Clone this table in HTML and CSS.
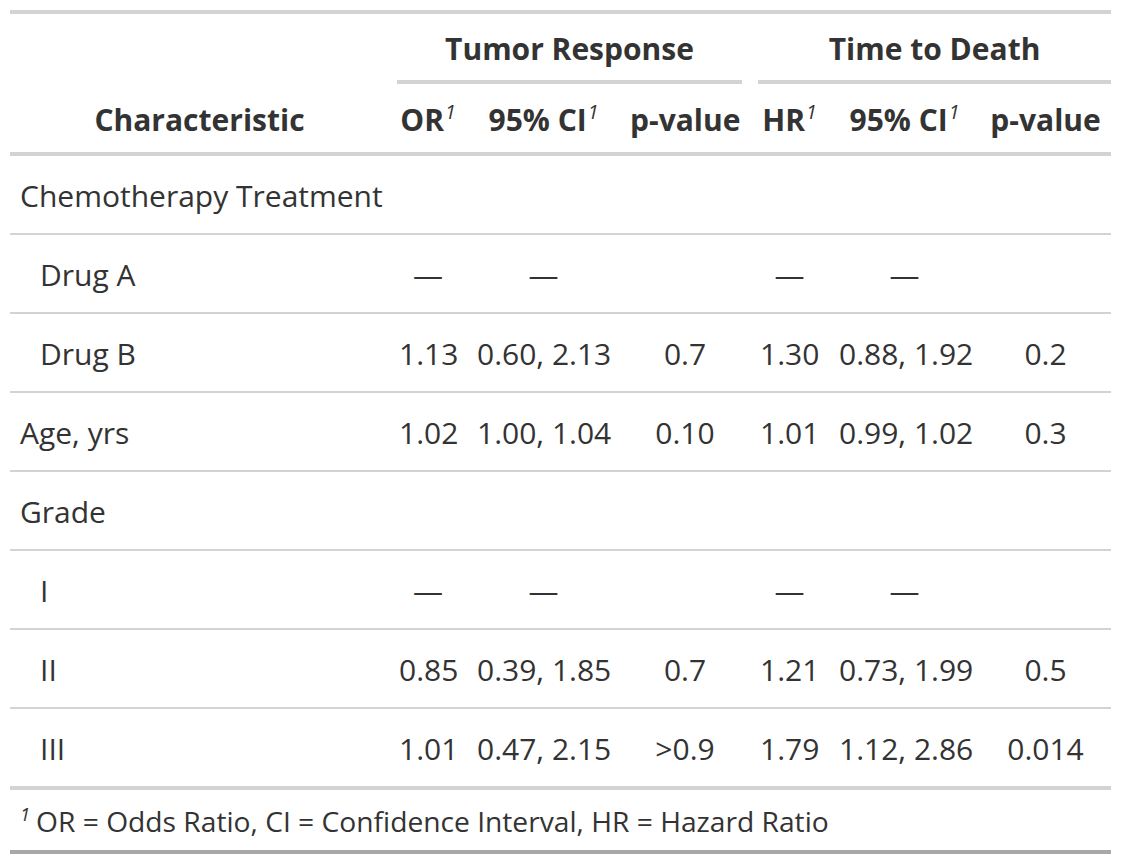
FILE: index.html
```html
<!DOCTYPE html>
<html>
<head>
<meta charset="utf-8">
<link rel="stylesheet" href="styles.css">
</head>
<body>
<table class="tbl">
  <colgroup>
    <col class="c-label">
    <col class="c-or">
    <col class="c-ci1">
    <col class="c-p1">
    <col class="c-hr">
    <col class="c-ci2">
    <col class="c-p2">
  </colgroup>
  <thead>
    <tr class="spanner-row">
      <th class="col-label stub-head" rowspan="2">Characteristic</th>
      <th class="spanner-outer first" colspan="3"><div class="spanner">Tumor Response</div></th>
      <th class="spanner-outer last" colspan="3"><div class="spanner">Time to Death</div></th>
    </tr>
    <tr class="label-row">
      <th class="col-label">OR<span class="mark">1</span></th>
      <th class="col-label">95% CI<span class="mark">1</span></th>
      <th class="col-label">p-value</th>
      <th class="col-label">HR<span class="mark">1</span></th>
      <th class="col-label">95% CI<span class="mark">1</span></th>
      <th class="col-label">p-value</th>
    </tr>
  </thead>
  <tbody>
    <tr class="row first-row">
      <td class="stub">Chemotherapy Treatment</td>
      <td></td><td></td><td></td><td></td><td></td><td></td>
    </tr>
    <tr class="row">
      <td class="stub indent">Drug A</td>
      <td>—</td><td>—</td><td></td><td>—</td><td>—</td><td></td>
    </tr>
    <tr class="row">
      <td class="stub indent">Drug B</td>
      <td>1.13</td><td>0.60, 2.13</td><td>0.7</td><td>1.30</td><td>0.88, 1.92</td><td>0.2</td>
    </tr>
    <tr class="row">
      <td class="stub">Age, yrs</td>
      <td>1.02</td><td>1.00, 1.04</td><td>0.10</td><td>1.01</td><td>0.99, 1.02</td><td>0.3</td>
    </tr>
    <tr class="row">
      <td class="stub">Grade</td>
      <td></td><td></td><td></td><td></td><td></td><td></td>
    </tr>
    <tr class="row">
      <td class="stub indent">I</td>
      <td>—</td><td>—</td><td></td><td>—</td><td>—</td><td></td>
    </tr>
    <tr class="row">
      <td class="stub indent">II</td>
      <td>0.85</td><td>0.39, 1.85</td><td>0.7</td><td>1.21</td><td>0.73, 1.99</td><td>0.5</td>
    </tr>
    <tr class="row">
      <td class="stub indent">III</td>
      <td>1.01</td><td>0.47, 2.15</td><td>&gt;0.9</td><td>1.79</td><td>1.12, 2.86</td><td>0.014</td>
    </tr>
  </tbody>
  <tfoot>
    <tr>
      <td class="footnote" colspan="7"><span class="mark fmark">1</span>OR = Odds Ratio, CI = Confidence Interval, HR = Hazard Ratio</td>
    </tr>
  </tfoot>
</table>
</body>
</html>
```
FILE: styles.css
```css
html, body {
  margin: 0;
  padding: 0;
  background: #ffffff;
}

body {
  font-family: "Open Sans", "Noto Sans", "Liberation Sans", sans-serif;
  color: #333333;
}

.tbl {
  margin: 10px;
  width: 1101px;
  table-layout: fixed;
  border-collapse: separate;
  border-spacing: 0;
  border-top: 4px solid #d3d3d3;
  border-bottom: 4px solid #a8a8a8;
  font-size: 30px;
}

.c-label { width: 379px; }
.c-or { width: 78px; }
.c-ci1 { width: 153px; }
.c-p1 { width: 130px; }
.c-hr { width: 79px; }
.c-ci2 { width: 151px; }
.c-p2 { width: 131px; }

th {
  font-weight: 700;
  padding: 0 10px;
  text-align: center;
  white-space: nowrap;
}

.col-label {
  padding-top: 4px;
  line-height: 64px;
  vertical-align: bottom;
  border-bottom: 4px solid #d3d3d3;
}

.spanner-outer {
  padding: 0 8px;
  vertical-align: top;
}

.spanner-outer.last {
  padding-right: 0;
}

.spanner {
  line-height: 63px;
  padding-top: 3px;
  border-bottom: 4px solid #d3d3d3;
}

.mark {
  font-style: italic;
  font-weight: 400;
  font-size: 65%;
  line-height: 0;
  vertical-align: 0.6em;
  margin-left: 1px;
}

td {
  padding: 3px 10px 0;
  line-height: 74px;
  text-align: center;
  white-space: nowrap;
  border-top: 2px solid #d3d3d3;
}

.first-row td {
  border-top: none;
}

td.stub {
  text-align: left;
}

td.stub.indent {
  padding-left: 30px;
}

td.footnote {
  text-align: left;
  padding-top: 2px;
  line-height: 58px;
  font-size: 28.2px;
  border-top: 4px solid #d3d3d3;
}

.fmark {
  margin-left: 0;
  margin-right: 6px;
}
```
